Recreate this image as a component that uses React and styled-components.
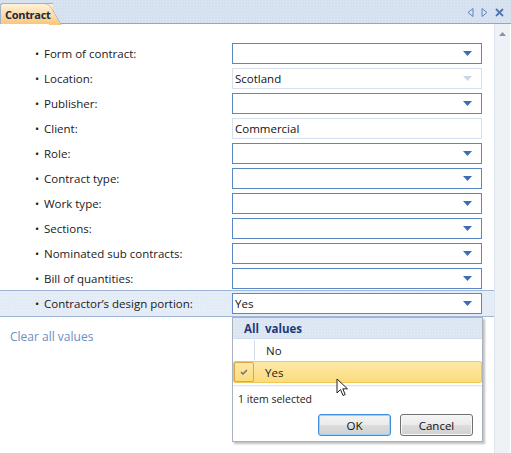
import React from "react";
import styled, { createGlobalStyle } from "styled-components";

const GlobalStyle = createGlobalStyle`
	html, body {
		margin: 0;
		padding: 0;
		background: #ffffff;
	}
	body {
		font-family: "Open Sans", "Noto Sans", sans-serif;
		font-size: 11.5px;
		color: #1c1c1c;
	}
`;

const rows = [
	{ label: "Form of contract:", kind: "drop" },
	{ label: "Location:", kind: "disabled", value: "Scotland" },
	{ label: "Publisher:", kind: "drop" },
	{ label: "Client:", kind: "text", value: "Commercial" },
	{ label: "Role:", kind: "drop" },
	{ label: "Contract type:", kind: "drop" },
	{ label: "Work type:", kind: "drop" },
	{ label: "Sections:", kind: "drop" },
	{ label: "Nominated sub contracts:", kind: "drop" },
	{ label: "Bill of quantities:", kind: "drop" },
	{ label: "Contractor\u2019s design portion:", kind: "drop", value: "Yes", active: true },
];

const DownArrow = ({ color }) => (
	<svg width="9" height="5" viewBox="0 0 9 5">
		<path d="M0 0 H9 L4.5 5 Z" fill={color} />
	</svg>
);

const Field = ({ row }) => (
	<FieldBox $kind={row.kind}>
		<FieldText>{row.value}</FieldText>
		{row.kind === "drop" && <DownArrow color="#3d6db4" />}
		{row.kind === "disabled" && <DownArrow color="#c9d6e8" />}
		{row.active && <ValuesPopup />}
	</FieldBox>
);

const ValuesPopup = () => (
	<Popup>
		<PopupHeader>All&nbsp; values</PopupHeader>
		<Option>
			<CheckCell />
			<OptionText>No</OptionText>
		</Option>
		<Option $selected>
			<CheckCell $selected>
				<svg width="8" height="6" viewBox="0 0 8 6">
					<path d="M1 3 L3 5 L7 1" stroke="#6b6b6b" strokeWidth="1.4" fill="none" />
				</svg>
			</CheckCell>
			<OptionText>Yes</OptionText>
		</Option>
		<PopupDivider />
		<SelectedCount>1 item selected</SelectedCount>
		<ButtonRow>
			<DialogButton $focused>OK</DialogButton>
			<DialogButton>Cancel</DialogButton>
		</ButtonRow>
		<Cursor width="13" height="20" viewBox="0 0 13 20">
			<path
				d="M1 1 L1 15 L4.5 11.5 L7 17.5 L9.2 16.5 L6.8 10.8 L11.5 10.8 Z"
				fill="#ffffff"
				stroke="#222"
				strokeWidth="1"
				strokeLinejoin="round"
			/>
		</Cursor>
	</Popup>
);

export default function App() {
	return (
		<>
			<GlobalStyle />
			<Window>
				<TabBar>
					<Tab>Contract</Tab>
					<TabTools>
						<svg width="7" height="9" viewBox="0 0 7 9">
							<path d="M6 0.5 L1 4.5 L6 8.5 Z" fill="none" stroke="#5f84b8" />
						</svg>
						<svg width="7" height="9" viewBox="0 0 7 9">
							<path d="M1 0.5 L6 4.5 L1 8.5 Z" fill="none" stroke="#5f84b8" />
						</svg>
						<svg width="9" height="9" viewBox="0 0 9 9">
							<path d="M1 1 L8 8 M8 1 L1 8" stroke="#4f77b0" strokeWidth="1.8" />
						</svg>
					</TabTools>
				</TabBar>
				<Body>
					<Content>
						<Form>
							{rows.map((row) => (
								<Row key={row.label} $active={row.active}>
									<Label>
										<Bullet>•</Bullet>
										{row.label}
									</Label>
									<Field row={row} />
								</Row>
							))}
						</Form>
						<ClearLink>Clear all values</ClearLink>
					</Content>
					<Scrollbar>
						<svg width="7" height="4" viewBox="0 0 7 4">
							<path d="M0 4 H7 L3.5 0 Z" fill="#8a93a0" />
						</svg>
					</Scrollbar>
				</Body>
			</Window>
		</>
	);
}

// Styled Components

const Window = styled.div`
	width: 511px;
	height: 453px;
	display: flex;
	flex-direction: column;
	background: #ffffff;
	overflow: hidden;
`;

const TabBar = styled.div`
	height: 23px;
	display: flex;
	align-items: flex-end;
	justify-content: space-between;
	background-color: #d6e1f0;
	background-image: radial-gradient(#dfe8f4 0.6px, transparent 0.8px);
	background-size: 3px 3px;
	border-bottom: 1px solid #8ea6c8;
`;

const Tab = styled.div`
	position: relative;
	height: 20px;
	margin-bottom: -1px;
	padding: 0 2px 0 4px;
	display: flex;
	align-items: center;
	font-weight: 700;
	font-size: 11px;
	letter-spacing: -0.3px;
	color: #15294a;
	background: linear-gradient(#fff2da, #fdd9a0 60%, #fbc678);
	border: 1px solid #9fb1cc;
	border-right: none;
	border-bottom: none;
	border-radius: 3px 0 0 0;
	z-index: 1;

	&::after {
		content: "";
		position: absolute;
		top: -1px;
		right: -9px;
		width: 12px;
		height: 21px;
		background: linear-gradient(#fff2da, #fdd9a0 60%, #fbc678);
		border-top: 1px solid #9fb1cc;
		border-right: 1px solid #9fb1cc;
		border-radius: 0 6px 0 0;
		transform: skewX(30deg);
		transform-origin: bottom left;
		z-index: -1;
	}
`;

const TabTools = styled.div`
	display: flex;
	align-items: center;
	gap: 7px;
	padding: 0 7px 6px 0;
`;

const Body = styled.div`
	flex: 1;
	display: flex;
`;

const Content = styled.div`
	flex: 1;
	padding-top: 17px;
`;

const Form = styled.div`
	display: flex;
	flex-direction: column;
`;

const Row = styled.div`
	box-sizing: border-box;
	display: grid;
	grid-template-columns: 232px 250px;
	align-items: center;
	background-color: ${(p) => (p.$active ? "#e3ebf6" : "transparent")};
	background-image: ${(p) =>
		p.$active ? "radial-gradient(#edf2f9 0.6px, transparent 0.8px)" : "none"};
	background-size: 3px 3px;
	border-top: 1px solid ${(p) => (p.$active ? "#9fb6d8" : "transparent")};
	border-bottom: 1px solid ${(p) => (p.$active ? "#9fb6d8" : "transparent")};
	margin: ${(p) => (p.$active ? "-1px 0" : "0")};
	height: ${(p) => (p.$active ? "27px" : "25px")};
`;

const Label = styled.div`
	display: flex;
	align-items: center;
	padding-left: 35px;
	white-space: nowrap;
	color: #1a1a1a;
`;

const Bullet = styled.span`
	width: 9px;
	font-size: 11px;
	line-height: 1;
`;

const FieldBox = styled.div`
	position: relative;
	height: 21px;
	box-sizing: border-box;
	display: flex;
	align-items: center;
	justify-content: space-between;
	padding: 0 9px 0 2px;
	background: #ffffff;
	border: 1px solid
		${(p) => (p.$kind === "drop" ? "#5b87c4" : "#d6e0ee")};
`;

const FieldText = styled.span`
	color: #111;
`;

const ClearLink = styled.div`
	margin: 12px 0 0 10px;
	font-size: 12px;
	color: #6a8ec4;
`;

const Scrollbar = styled.div`
	width: 16px;
	margin-right: 1px;
	display: flex;
	justify-content: center;
	padding-top: 8px;
	box-sizing: border-box;
	background: #eef1f5;
	border-left: 1px solid #dfe5ee;
`;

const Popup = styled.div`
	position: absolute;
	top: 23px;
	left: -1px;
	width: 251px;
	height: 125px;
	box-sizing: border-box;
	background: #ffffff;
	border: 1px solid #a9b3c0;
	box-shadow: 2px 2px 2px rgba(0, 0, 0, 0.25);
	z-index: 5;
	display: flex;
	flex-direction: column;
`;

const PopupHeader = styled.div`
	height: 20px;
	display: flex;
	align-items: center;
	padding-left: 11px;
	font-weight: 700;
	color: #1d3a7a;
	background-color: #dce6f3;
	background-image: radial-gradient(#e6edf7 0.6px, transparent 0.8px);
	background-size: 3px 3px;
	border-bottom: 1px solid #cfdbeb;
`;

const Option = styled.div`
	height: 22px;
	display: flex;
	align-items: center;
	box-sizing: border-box;
	background: ${(p) => (p.$selected ? "linear-gradient(#fde9a8, #fbdc7c)" : "transparent")};
	border: 1px solid ${(p) => (p.$selected ? "#f0c858" : "transparent")};
	border-radius: 2px;
`;

const CheckCell = styled.div`
	width: 20px;
	height: 100%;
	box-sizing: border-box;
	display: flex;
	align-items: center;
	justify-content: center;
	border: ${(p) => (p.$selected ? "1px solid #d8a848" : "none")};
	border-right: 1px solid ${(p) => (p.$selected ? "#d8a848" : "#d3dced")};
	border-radius: ${(p) => (p.$selected ? "2px" : "0")};
	margin-right: 11px;
	margin-left: ${(p) => (p.$selected ? "0" : "1px")};
`;

const OptionText = styled.span`
	color: #222;
`;

const PopupDivider = styled.div`
	height: 1px;
	margin: 2px 0 0;
	background: #e3e8ef;
	border-bottom: 1px solid #f4f6f9;
`;

const SelectedCount = styled.div`
	padding: 5px 0 0 5px;
	font-size: 10.5px;
	color: #222;
`;

const ButtonRow = styled.div`
	display: flex;
	justify-content: flex-end;
	gap: 9px;
	padding: 8px 9px 0 0;
`;

const DialogButton = styled.button`
	width: 73px;
	height: 22px;
	font-family: inherit;
	font-size: 11.5px;
	color: #111;
	border-radius: 3px;
	border: 1px solid ${(p) => (p.$focused ? "#3c8ee0" : "#707070")};
	background: linear-gradient(#f4f4f4, #ebebeb 50%, #dddddd 51%, #d0d0d0);
	box-shadow: inset 0 0 0 1px ${(p) => (p.$focused ? "#9fd0f5" : "#f8f8f8")};
	padding: 0;
`;

const Cursor = styled.svg`
	position: absolute;
	left: 103px;
	top: 60px;
`;
